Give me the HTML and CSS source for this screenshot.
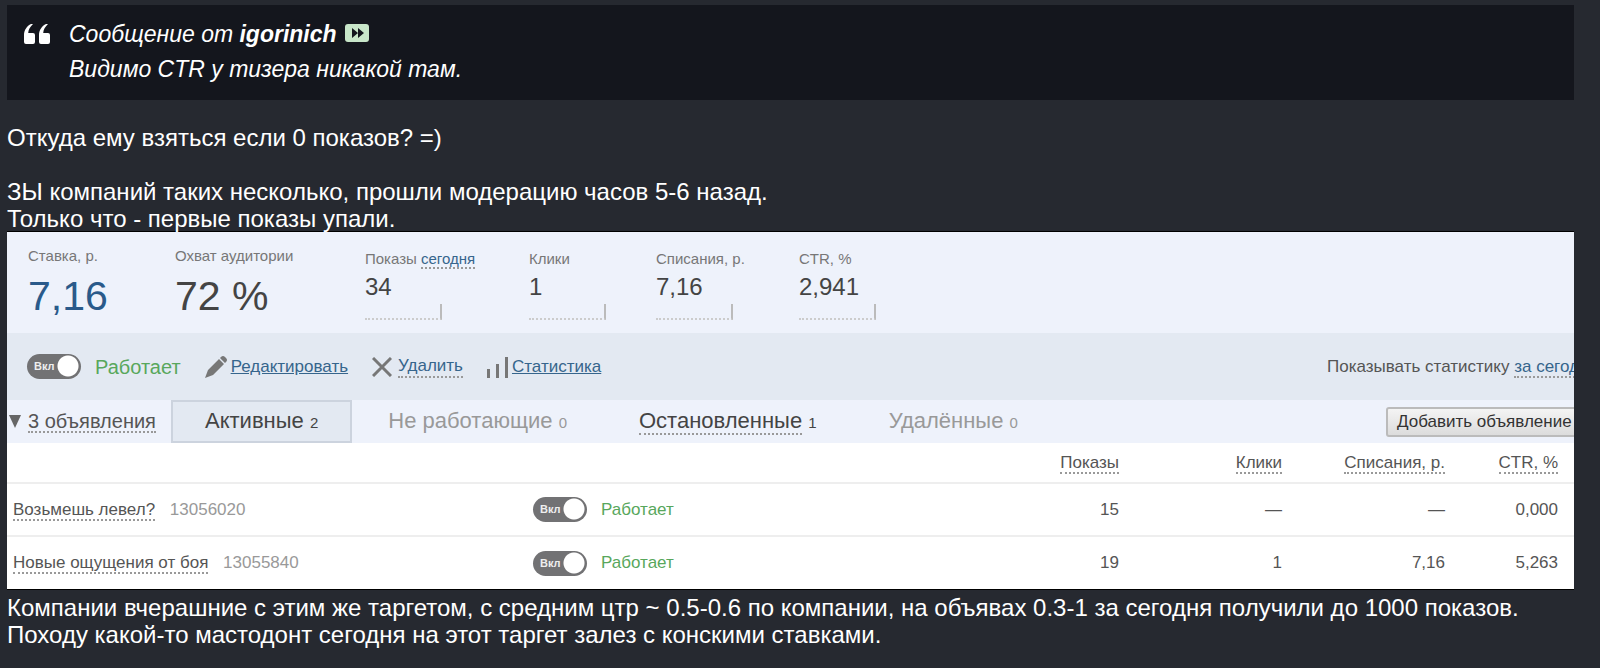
FILE: index.html
```html
<!DOCTYPE html>
<html lang="ru">
<head>
    <title>Сообщение</title>
    <meta charset="UTF-8">
    <meta name="viewport" content="width=device-width, initial-scale=1.0">
    <link rel="stylesheet" href="styles.css">
</head>
<body>
    <article class="post">
        <blockquote class="quote">
            <svg class="quote-icon" width="26" height="20" viewBox="0 0 26 20" fill="#fff">
                <path d="M7 0H9C6 3 4.500 5.500 4.200 9H9a2 2 0 0 1 2 2v7a2 2 0 0 1-2 2H2a2 2 0 0 1-2-2v-7C0 6 3 2 7 0z"/>
                <path d="M22 0h2c-3 3-4.500 5.500-4.800 9H24a2 2 0 0 1 2 2v7a2 2 0 0 1-2 2h-7a2 2 0 0 1-2-2v-7c0-5 3-9 7-11z"/>
            </svg>
            <div class="quote-text">
                <div>Сообщение от <strong>igorinich</strong>
                    <a href="#" class="quote-link" aria-label="Перейти к сообщению">
                        <svg width="24" height="18" viewBox="0 0 24 18">
                            <rect width="24" height="18" rx="3" fill="#c8e6c9"/>
                            <path d="M7 4l6 5-6 5zM13 4l6 5-6 5z" fill="#14161d"/>
                        </svg>
                    </a>
                </div>
                <div>Видимо CTR у тизера никакой там.</div>
            </div>
        </blockquote>

        <p class="gap">Откуда ему взяться если 0 показов? =)</p>
        <p>ЗЫ компаний таких несколько, прошли модерацию часов 5-6 назад.<br>Только что - первые показы упали.</p>

        <section class="panel">
            <div class="stats">
                <div class="stat big">
                    <span class="stat-label">Ставка, р.</span>
                    <span class="stat-value blue">7,16</span>
                </div>
                <div class="stat big">
                    <span class="stat-label">Охват аудитории</span>
                    <span class="stat-value">72 %</span>
                </div>
                <div class="stat">
                    <span class="stat-label">Показы <a href="#" class="dotted">сегодня</a></span>
                    <span class="stat-value">34</span>
                    <span class="spark"></span>
                </div>
                <div class="stat">
                    <span class="stat-label">Клики</span>
                    <span class="stat-value">1</span>
                    <span class="spark"></span>
                </div>
                <div class="stat">
                    <span class="stat-label">Списания, р.</span>
                    <span class="stat-value">7,16</span>
                    <span class="spark"></span>
                </div>
                <div class="stat">
                    <span class="stat-label">CTR, %</span>
                    <span class="stat-value">2,941</span>
                    <span class="spark"></span>
                </div>
            </div>

            <div class="toolbar">
                <label class="switch"><input type="checkbox" checked><span>Вкл</span></label>
                <span class="status">Работает</span>
                <div class="action edit">
                    <svg width="22" height="22" viewBox="0 0 22 22" fill="#777">
                        <path d="M0 22l3-8L14 3l5 5L8 19zM15 2l1-1q2-2 4 0l1 1q2 2 0 4l-1 1z"/>
                    </svg>
                    <a href="#">Редактировать</a>
                </div>
                <div class="action remove">
                    <svg width="20" height="20" viewBox="0 0 20 20" stroke="#777" stroke-width="3">
                        <path d="M1 1l18 18M19 1L1 19"/>
                    </svg>
                    <a href="#" class="dotted">Удалить</a>
                </div>
                <div class="action chart">
                    <svg width="21" height="22" viewBox="0 0 21 22" fill="#777">
                        <path d="M0 13h3v9H0zM9 8h3v14H9zM18 1h3v21h-3z"/>
                    </svg>
                    <a href="#">Статистика</a>
                </div>
                <span class="period">Показывать статистику <a href="#" class="dotted">за сегодня</a></span>
            </div>

            <div class="tabs">
                <div class="total">
                    <svg width="12" height="13" viewBox="0 0 12 13"><path d="M0 0h12L6 13z" fill="#666"/></svg>
                    <a href="#" class="dotted">3 объявления</a>
                </div>
                <button class="tab active">Активные <small>2</small></button>
                <button class="tab muted">Не работающие <small>0</small></button>
                <button class="tab"><span class="dotted">Остановленные</span> <small>1</small></button>
                <button class="tab muted">Удалённые <small>0</small></button>
                <button class="add">Добавить объявление</button>
            </div>

            <table class="ads">
                <colgroup>
                    <col class="col-name"><col><col class="col-num"><col class="col-num"><col class="col-ctr">
                </colgroup>
                <thead>
                    <tr>
                        <th></th>
                        <th><a href="#" class="dotted">Показы</a></th>
                        <th><a href="#" class="dotted">Клики</a></th>
                        <th><a href="#" class="dotted">Списания, р.</a></th>
                        <th><a href="#" class="dotted">CTR, %</a></th>
                    </tr>
                </thead>
                <tbody>
                    <tr>
                        <td>
                            <div class="ad">
                                <div class="ad-name"><a href="#" class="dotted">Возьмешь левел?</a> <span class="ad-id">13056020</span></div>
                                <label class="switch"><input type="checkbox" checked><span>Вкл</span></label>
                                <span class="status">Работает</span>
                            </div>
                        </td>
                        <td>15</td>
                        <td>—</td>
                        <td>—</td>
                        <td>0,000</td>
                    </tr>
                    <tr>
                        <td>
                            <div class="ad">
                                <div class="ad-name"><a href="#" class="dotted">Новые ощущения от боя</a> <span class="ad-id">13055840</span></div>
                                <label class="switch"><input type="checkbox" checked><span>Вкл</span></label>
                                <span class="status">Работает</span>
                            </div>
                        </td>
                        <td>19</td>
                        <td>1</td>
                        <td>7,16</td>
                        <td>5,263</td>
                    </tr>
                </tbody>
            </table>
        </section>

        <p>Компании вчерашние с этим же таргетом, с средним цтр ~ 0.5-0.6 по компании, на объявах 0.3-1 за сегодня получили до 1000 показов.<br>Походу какой-то мастодонт сегодня на этот таргет залез с конскими ставками.</p>
    </article>
</body>
</html>
```
FILE: styles.css
```css
* {
  box-sizing: border-box;
}

body {
  margin: 0;
  background-color: #262930;
  color: #fff;
  font-family: "Liberation Sans", Arial, sans-serif;
  font-size: 24px;
  line-height: 27px;
}

.post {
  padding: 5px 26px 5px 7px;
}

p {
  margin: 0;
}

.quote {
  display: flex;
  gap: 19px;
  margin: 0 0 24px;
  padding: 12px 17px 13px;
  background-color: #14161d;
  font-size: 23px;
  font-style: italic;
  line-height: 35px;
}

.quote-icon {
  margin-top: 7px;
}

.quote-link {
  margin-left: 2px;
}

.gap {
  margin-bottom: 27px;
}

.panel {
  margin-top: -1px;
  margin-bottom: 4px;
  overflow: hidden;
  background-color: #fff;
  border-top: 1px solid #000;
  border-bottom: 1px solid #000;
  color: #555;
  font-size: 17px;
  line-height: 20px;
  white-space: nowrap;
}

.panel a {
  color: #36658c;
}

.panel .dotted {
  text-decoration: none;
  border-bottom: 2px dotted #999;
}

/* stats */
.stats {
  display: grid;
  grid-template-columns: 147px 190px 164px 127px 143px 1fr;
  height: 101px;
  padding: 15px 0 0 21px;
  background-color: #eef2fb;
}

.stat {
  display: flex;
  flex-direction: column;
  align-items: flex-start;
  padding-top: 3px;
}

.stat.big {
  padding-top: 0;
}

.stat-label {
  color: #777;
  font-size: 15px;
  line-height: 18px;
}

.stat-value {
  margin-top: 6px;
  color: #444;
  font-size: 24px;
  line-height: 26px;
}

.big .stat-value {
  margin-top: 9px;
  font-size: 41px;
  line-height: 44px;
}

.stat .blue {
  color: #2a5a8a;
}

.spark {
  width: 77px;
  height: 16px;
  margin-top: 4px;
  border-right: 2px solid #bbb;
  border-bottom: 2px dotted #ccc;
}

/* toolbar */
.toolbar {
  display: flex;
  align-items: center;
  height: 67px;
  padding-left: 20px;
  background-color: #e3e9f2;
}

.switch {
  position: relative;
  flex-shrink: 0;
  width: 54px;
  height: 25px;
  margin-right: 14px;
}

.switch input {
  appearance: none;
  display: block;
  width: 54px;
  height: 25px;
  margin: 0;
  border-radius: 13px;
  background: radial-gradient(circle at 41px 12px, #fff 10px, #727274 11px);
}

.switch span {
  position: absolute;
  top: 2px;
  left: 7px;
  color: #eee;
  font-size: 11px;
  font-weight: bold;
}

.status {
  color: #58a75c;
}

.toolbar .status {
  font-size: 20px;
}

.action {
  display: flex;
  align-items: center;
  gap: 4px;
  margin-left: 24px;
}

.remove {
  gap: 6px;
}

.period {
  width: 247px;
  margin-left: auto;
}

/* tabs */
.tabs {
  display: flex;
  align-items: center;
  height: 43px;
  background-color: #eef2fb;
}

.total {
  display: flex;
  align-items: center;
  gap: 7px;
  width: 164px;
  padding-left: 2px;
  font-size: 20px;
}

.panel .total a,
.ads a {
  color: #555;
}

.tab {
  height: 43px;
  padding: 0 36px 1px;
  background: none;
  border: none;
  color: #444;
  font: 22px "Liberation Sans", Arial, sans-serif;
}

.tab small {
  font-size: 15px;
}

.tab.active {
  padding: 0 32px 1px;
  background-color: #e3e9f2;
  border: 2px solid #ccd3de;
}

.tab.muted {
  color: #999;
}

.add {
  flex-shrink: 0;
  width: 200px;
  height: 30px;
  margin: 0 -12px 0 auto;
  padding: 0 9px;
  background: linear-gradient(#f4f4f4, #dcdcdc);
  border: 2px solid #bbb;
  border-radius: 3px;
  color: #333;
  font: 17px "Liberation Sans", Arial, sans-serif;
  text-align: left;
}

/* table */
.ads {
  width: 100%;
  table-layout: fixed;
  border-collapse: collapse;
}

.col-name {
  width: 61%;
}

.col-num {
  width: 163px;
}

.col-ctr {
  width: 129px;
}

.ads th,
.ads td {
  height: 53px;
  padding: 0;
  text-align: right;
  font-weight: normal;
}

.ads th {
  height: 40px;
}

.ads td {
  border-top: 2px solid #eee;
}

.ads th:last-child,
.ads td:last-child {
  padding-right: 16px;
}

.ad {
  display: flex;
  align-items: center;
  text-align: left;
}

.ad-name {
  width: 526px;
  padding-left: 6px;
}

.ad-id {
  margin-left: 10px;
  color: #999;
}
```
